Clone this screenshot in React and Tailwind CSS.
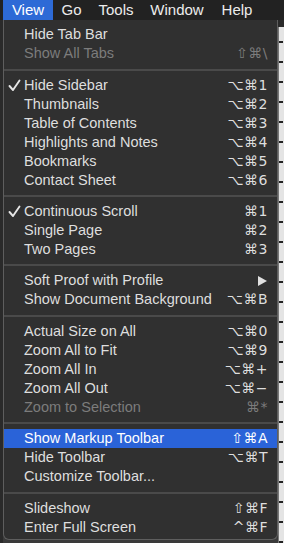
import React from 'react';

const sections = [
  [
    { label: 'Hide Tab Bar' },
    { label: 'Show All Tabs', keys: '⇧⌘\\', disabled: true },
  ],
  [
    { label: 'Hide Sidebar', keys: '⌥⌘1', checked: true },
    { label: 'Thumbnails', keys: '⌥⌘2' },
    { label: 'Table of Contents', keys: '⌥⌘3' },
    { label: 'Highlights and Notes', keys: '⌥⌘4' },
    { label: 'Bookmarks', keys: '⌥⌘5' },
    { label: 'Contact Sheet', keys: '⌥⌘6' },
  ],
  [
    { label: 'Continuous Scroll', keys: '⌘1', checked: true },
    { label: 'Single Page', keys: '⌘2' },
    { label: 'Two Pages', keys: '⌘3' },
  ],
  [
    { label: 'Soft Proof with Profile', submenu: true },
    { label: 'Show Document Background', keys: '⌥⌘B' },
  ],
  [
    { label: 'Actual Size on All', keys: '⌥⌘0' },
    { label: 'Zoom All to Fit', keys: '⌥⌘9' },
    { label: 'Zoom All In', keys: '⌥⌘+' },
    { label: 'Zoom All Out', keys: '⌥⌘−' },
    { label: 'Zoom to Selection', keys: '⌘*', disabled: true },
  ],
  [
    { label: 'Show Markup Toolbar', keys: '⇧⌘A', active: true },
    { label: 'Hide Toolbar', keys: '⌥⌘T' },
    { label: 'Customize Toolbar...' },
  ],
  [
    { label: 'Slideshow', keys: '⇧⌘F' },
    { label: 'Enter Full Screen', keys: '^⌘F' },
  ],
];

const Check = () => (
  <svg width="13" height="13" viewBox="0 0 13 13" className="absolute left-[4px] top-[3px]">
    <path d="M1.5 7 L5 11 L11.5 1.5" fill="none" stroke="#e6e6e6" strokeWidth="1.9" strokeLinecap="round" strokeLinejoin="round" />
  </svg>
);

const MenuRow = ({ item }) => {
  const textColor = item.active ? 'text-white' : item.disabled ? 'text-[#7c7c7c]' : 'text-[#dedede]';
  return (
    <div className={`relative flex h-[19px] items-center justify-between pl-[20px] pr-[9px] ${item.active ? 'bg-[#2a63d8]' : ''} ${textColor}`}>
      {item.checked && <Check />}
      <span className="whitespace-nowrap">{item.label}</span>
      {item.keys && (
        <span className="whitespace-nowrap tracking-[0.5px] font-['DejaVu_Sans',sans-serif] text-[14px]">{item.keys}</span>
      )}
      {item.submenu && (
        <svg width="9" height="10" viewBox="0 0 9 10" className="mr-[1px]">
          <path d="M0 0 L9 5 L0 10 Z" fill="#e0e0e0" />
        </svg>
      )}
    </div>
  );
};

const App = () => {
  return (
    <div className="h-[543px] w-[284px] overflow-hidden bg-[#3a3a3a] font-['Liberation_Sans',Arial,sans-serif] text-[14.5px]">
      <div className="flex h-[20px] items-center bg-[#222222] pl-[3px] text-[15px] text-[#ececec]">
        <span className="flex h-full w-[50px] items-center justify-center bg-[#2d6ad6] text-white">View</span>
        <span className="w-[37px] text-center">Go</span>
        <span className="w-[52px] text-center">Tools</span>
        <span className="w-[70px] text-center">Window</span>
        <span className="w-[50px] text-center">Help</span>
      </div>
      <div className="flex h-[523px]">
        <div className="w-[3px] bg-[#2a2a2a]" />
        <div className="flex h-[520px] w-[275px] flex-col rounded-b-[6px] border border-t-0 border-[#5e5e5e] bg-[#303030] pt-[5px]">
          {sections.map((section, i) => (
            <div key={i}>
              {i > 0 && (
                <div className={`flex items-center ${i === 1 || i === 4 || i === 6 ? 'h-[13px]' : 'h-[12px]'}`}>
                  <div className="h-[2px] w-full bg-[#4a4a4a]" />
                </div>
              )}
              {section.map((item) => (
                <MenuRow key={item.label} item={item} />
              ))}
            </div>
          ))}
        </div>
        <div className="flex flex-1 flex-col">
          <div className="h-[8px] bg-[#2a2a2a]" />
          <div className="flex flex-1 flex-col gap-[18px] border-l border-[#777] bg-[#e4e4e4] pt-[14px]">
            {Array.from({ length: 26 }).map((_, i) => (
              <div key={i} className="h-[2px] w-[4px] bg-[#222]" />
            ))}
          </div>
        </div>
      </div>
    </div>
  );
};

export default App;
